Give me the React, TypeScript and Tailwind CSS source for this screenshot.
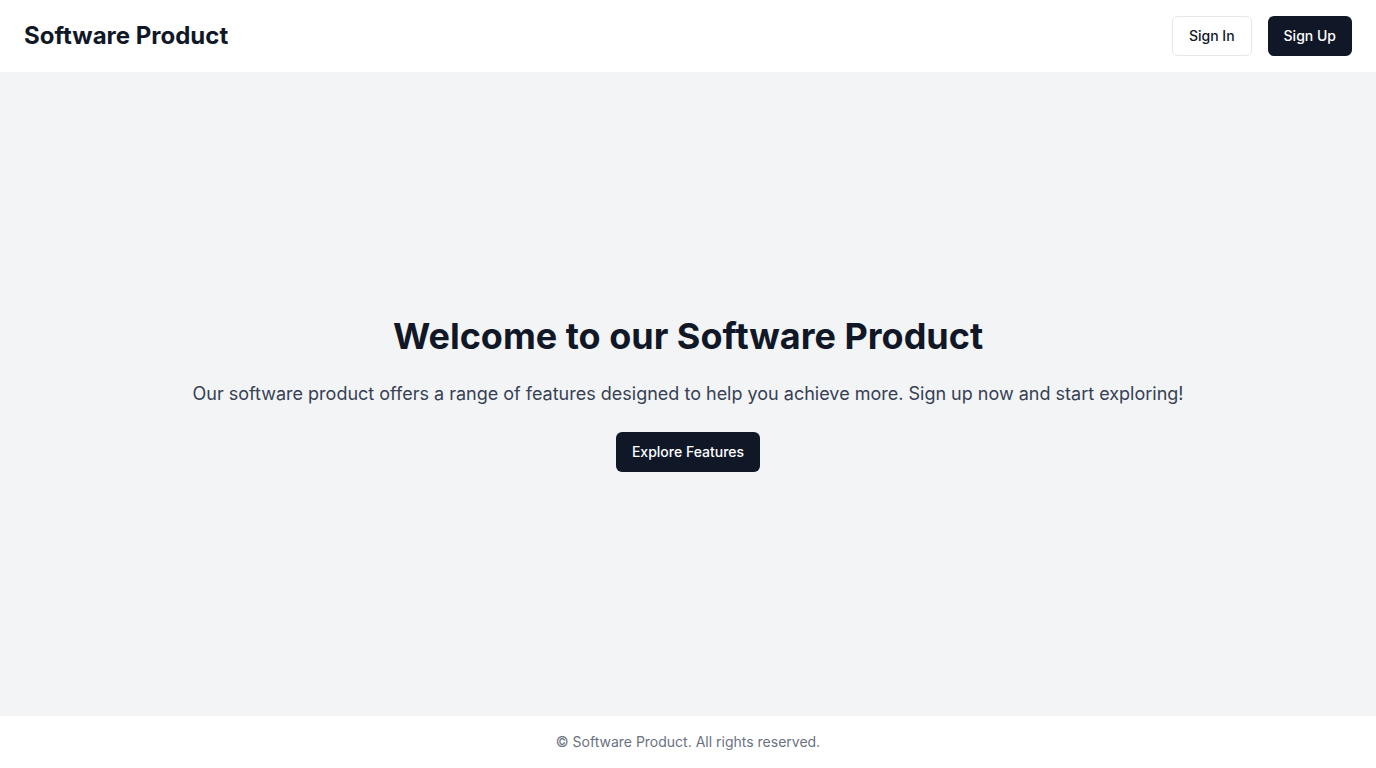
export default function App() {
  return (
    <div
      className="flex min-h-screen flex-col bg-gray-100 text-gray-900"
      style={{ fontFamily: "Inter, 'Noto Sans', sans-serif" }}
    >
      <header className="flex items-center justify-between bg-white px-6 py-4">
        <h1 className="text-2xl font-bold">Software Product</h1>
        <div className="flex gap-4">
          <button className="h-10 rounded-md border border-gray-200 bg-white px-4 text-sm font-medium text-gray-900">
            Sign In
          </button>
          <button className="h-10 rounded-md bg-gray-900 px-4 text-sm font-medium text-white">
            Sign Up
          </button>
        </div>
      </header>

      <main className="flex flex-1 flex-col items-center justify-center px-6 text-center">
        <h2 className="mb-6 text-4xl font-bold">Welcome to our Software Product</h2>
        <p className="mb-6 text-lg text-gray-700">
          Our software product offers a range of features designed to help you achieve more. Sign up now and start exploring!
        </p>
        <button className="h-10 rounded-md bg-gray-900 px-4 text-sm font-medium text-white">
          Explore Features
        </button>
      </main>

      <footer className="bg-white py-4 text-center text-sm text-gray-500">
        © Software Product. All rights reserved.
      </footer>
    </div>
  );
}
